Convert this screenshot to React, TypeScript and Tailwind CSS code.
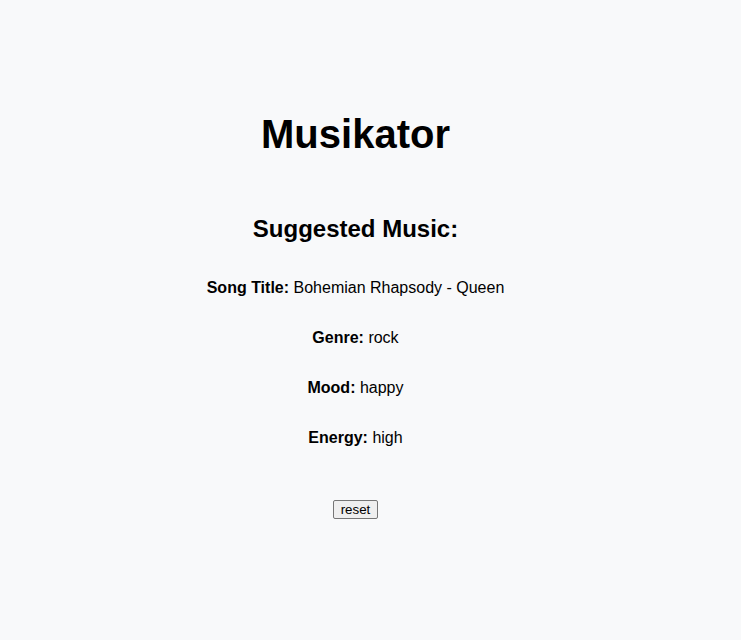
export default function App() {
  const rows: [string, string][] = [
    ['Song Title:', 'Bohemian Rhapsody - Queen'],
    ['Genre:', 'rock'],
    ['Mood:', 'happy'],
    ['Energy:', 'high'],
  ];

  return (
    <div className="min-h-[640px] bg-[#f8f9fa] text-black font-['Liberation_Sans',Arial,sans-serif] pr-[30px]">
      <div className="flex flex-col items-center pt-[111px]">
        <h1 className="text-[40px] leading-[46px] font-bold">Musikator</h1>
        <h2 className="mt-[58px] text-[24px] leading-[28px] font-bold">Suggested Music:</h2>
        <div className="mt-[36px] flex flex-col items-center gap-[32px]">
          {rows.map(([label, value]) => (
            <p key={label} className="text-[16px] leading-[18px]">
              <span className="font-bold">{label}</span> {value}
            </p>
          ))}
        </div>
        <button className="mt-[53px] text-[13.33px] leading-[15px] px-[7px] py-[1px] bg-[#efefef] border border-[#767676] rounded-[2px]">
          reset
        </button>
      </div>
    </div>
  );
}
